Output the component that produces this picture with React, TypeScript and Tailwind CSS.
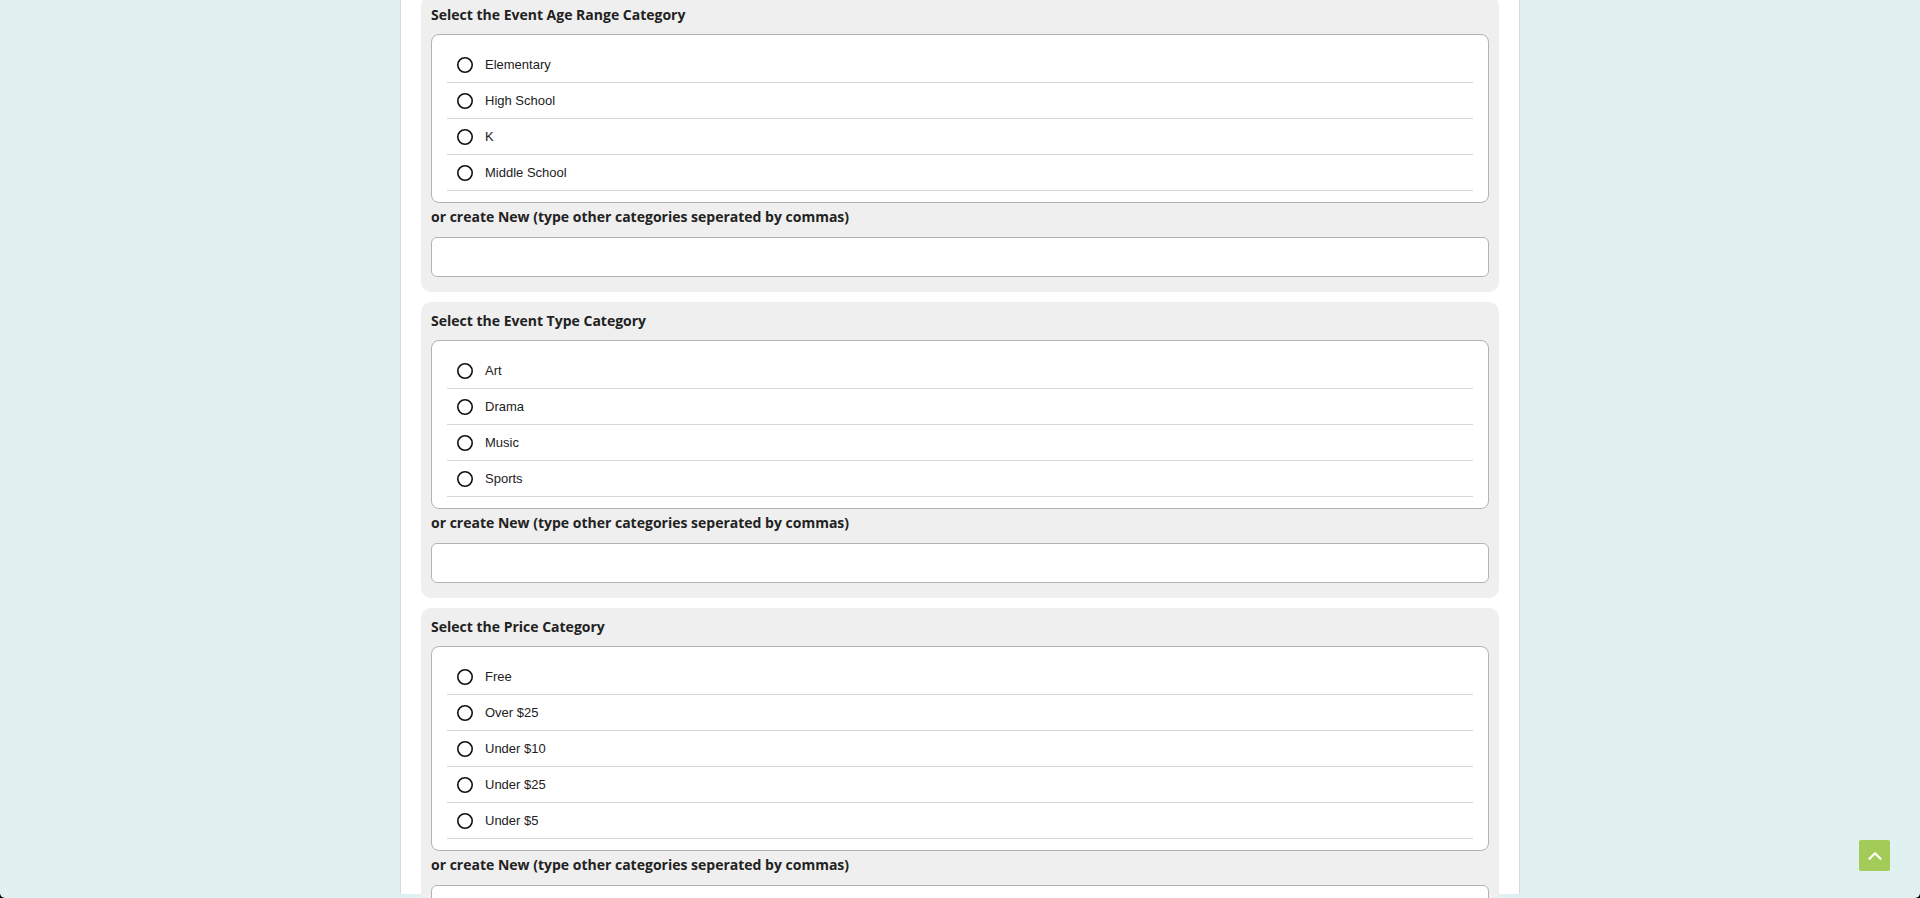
import { ChevronUp } from 'lucide-react';

interface CategoryGroupProps {
  title: string;
  options: string[];
}

const groups: CategoryGroupProps[] = [
  { title: 'Select the Event Age Range Category', options: ['Elementary', 'High School', 'K', 'Middle School'] },
  { title: 'Select the Event Type Category', options: ['Art', 'Drama', 'Music', 'Sports'] },
  { title: 'Select the Price Category', options: ['Free', 'Over $25', 'Under $10', 'Under $25', 'Under $5'] },
];

function RadioCircle() {
  return (
    <svg width="18" height="18" viewBox="0 0 18 18" className="shrink-0">
      <circle cx="9" cy="9" r="7.2" fill="#fff" stroke="#111" strokeWidth="1.6" />
    </svg>
  );
}

function CategoryGroup({ title, options }: CategoryGroupProps) {
  return (
    <div className="bg-[#efefef] rounded-[10px] px-[10px] pt-[10px] pb-[15px]">
      <h3 className="h-[18px] leading-[18px] text-[14px] font-bold text-[#222] mb-[10px]">{title}</h3>

      {/* Existing categories */}
      <div className="bg-white border border-[#b3b3b3] rounded-[8px] px-[15px] pt-[12px] pb-[11px]">
        {options.map((option) => (
          <label
            key={option}
            className="h-[36px] flex items-center gap-[11px] pl-[9px] border-b border-[#d6d6d6] cursor-pointer"
          >
            <RadioCircle />
            <span className="text-[13px] text-[#222] font-['Liberation_Sans',Arial,sans-serif]">{option}</span>
          </label>
        ))}
      </div>

      <p className="h-[20px] leading-[20px] mt-[4px] text-[14px] font-bold text-[#222]">
        or create New (type other categories seperated by commas)
      </p>
      <input
        type="text"
        className="mt-[10px] w-full h-[40px] bg-white border border-[#b3b3b3] rounded-[6px] px-3 outline-none"
      />
    </div>
  );
}

export default function App() {
  return (
    <div className="bg-black h-[898px] overflow-hidden">
      <div className="relative h-[898px] bg-[#e1f1f1] rounded-b-[5px] overflow-hidden font-['Open_Sans','Noto_Sans',sans-serif]">
        <div className="w-[1120px] mx-auto h-full bg-white border-x border-[#d3dcdc] px-[20px] -mt-[4px] flex flex-col gap-[10px]">
          {groups.map((group) => (
            <CategoryGroup key={group.title} title={group.title} options={group.options} />
          ))}
        </div>

        {/* Back to top */}
        <button className="absolute right-[30px] bottom-[27px] w-[31px] h-[31px] rounded-[2px] bg-[#a2cc57] flex items-center justify-center">
          <ChevronUp size={22} color="#fff" strokeWidth={2.5} />
        </button>
      </div>
    </div>
  );
}
